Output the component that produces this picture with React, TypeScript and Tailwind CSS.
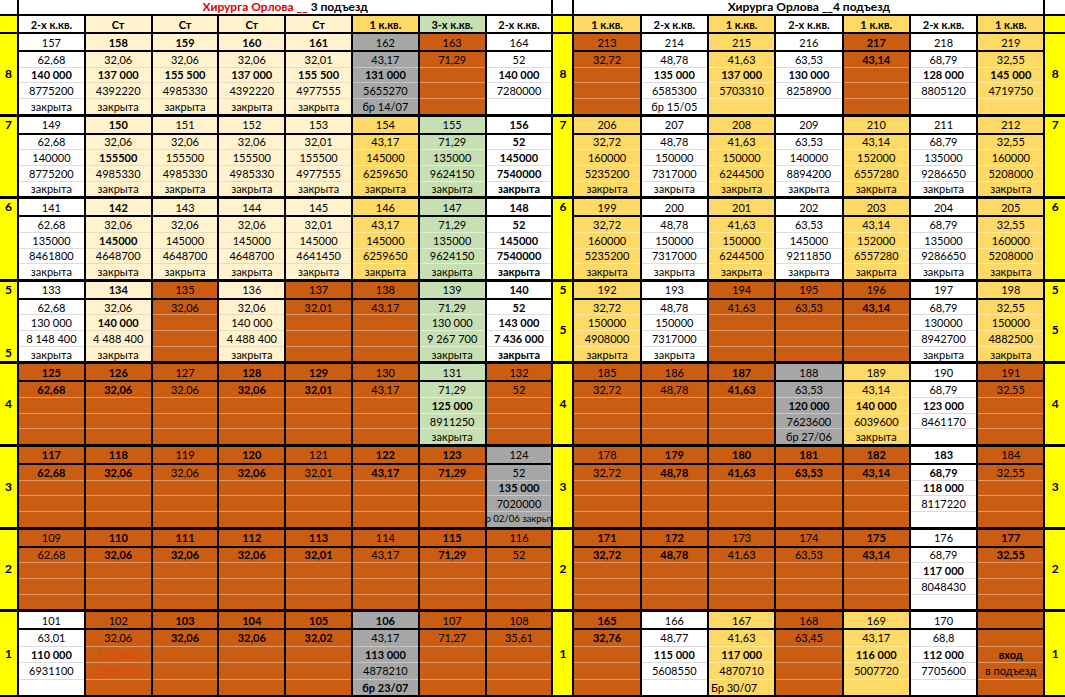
import React from "react";

type C = string[];

const BG: Record<string, string> = {
  w: "bg-white",
  c: "bg-[#fff2cc]",
  g: "bg-[#ffd966]",
  gr: "bg-[#c6e0b4]",
  o: "bg-[#cb5d12]",
  s: "bg-[#a6a6a6]",
};
const LINE: Record<string, string> = {
  w: "border-[#dcdcdc]",
  c: "border-[#e6dcc0]",
  g: "border-[#ffeaa6]",
  gr: "border-[#e2efd9]",
  o: "border-[#e09a70]",
  s: "border-[#c8c8c8]",
};

const GRID =
  "grid grid-cols-[17px_repeat(8,64.8px)_19px_repeat(7,65.3px)_1fr] gap-x-[2px]";

function parse(s: string) {
  let bold = false,
    red = false,
    left = false,
    small = false;
  let t = s;
  while (t.length && "*!<~".includes(t[0])) {
    if (t[0] === "*") bold = true;
    if (t[0] === "!") {
      red = true;
      bold = true;
    }
    if (t[0] === "<") left = true;
    if (t[0] === "~") small = true;
    t = t.slice(1);
  }
  return { t, bold, red, left, small };
}

function Txt({ s }: { s: string }) {
  const p = parse(s);
  return (
    <span
      className={`${p.bold ? "font-bold" : "font-normal"} ${p.red ? "text-[#e8470a]" : "text-black"} ${
        p.small ? "text-[9.6px]" : ""
      }`}
    >
      {p.t}
    </span>
  );
}

function Cell({ c }: { c: C }) {
  const bg = BG[c[0]];
  const line = LINE[c[0]];
  const rows = [c[2] || "", c[3] || "", c[4] || "", c[5] || ""];
  return (
    <div className="flex flex-col gap-[2px] min-w-0">
      <div className={`h-[16px] flex items-center justify-center ${bg}`}>
        <Txt s={c[1] || ""} />
      </div>
      <div className={`flex-1 flex flex-col ${bg}`}>
        {rows.map((r, i) => {
          const p = parse(r);
          return (
            <div
              key={i}
              className={`flex-1 flex items-center overflow-hidden whitespace-nowrap ${
                p.left ? "justify-start pl-[2px]" : "justify-center"
              } ${i < 3 ? "border-b " + line : ""}`}
            >
              <Txt s={r} />
            </div>
          );
        })}
      </div>
    </div>
  );
}

type Mode = "mid" | "top" | "tb" | "tm";

function Label({ n, mode }: { n: string; mode: Mode }) {
  const L = "font-bold text-[12px] text-black";
  if (mode === "mid")
    return (
      <div className={`bg-[#ffff00] flex items-center justify-center ${L}`}>{n}</div>
    );
  return (
    <div className={`bg-[#ffff00] flex flex-col ${L}`}>
      <div className="h-[16px] flex items-center justify-center">{n}</div>
      <div className="flex-1 flex items-center justify-center">{mode === "tm" ? n : ""}</div>
      {mode === "tb" && <div className="h-[16px] flex items-center justify-center">{n}</div>}
    </div>
  );
}

type Floor = { n: string; modes: [Mode, Mode, Mode]; s3: C[]; s4: C[] };

const floors: Floor[] = [
  {
    n: "8",
    modes: ["mid", "mid", "mid"],
    s3: [
      ["w", "157", "62,68", "*140 000", "8775200", "закрыта"],
      ["c", "*158", "32,06", "*137 000", "4392220", "закрыта"],
      ["c", "*159", "32,06", "*155 500", "4985330", "закрыта"],
      ["c", "*160", "32,06", "*137 000", "4392220", "закрыта"],
      ["c", "*161", "32,01", "*155 500", "4977555", "закрыта"],
      ["s", "162", "43,17", "*131 000", "5655270", "бр 14/07"],
      ["o", "163", "71,29"],
      ["w", "164", "52", "*140 000", "7280000", ""],
    ],
    s4: [
      ["o", "213", "32,72"],
      ["w", "214", "48,78", "*135 000", "6585300", "бр 15/05"],
      ["g", "215", "41,63", "*137 000", "5703310", ""],
      ["w", "216", "63,53", "*130 000", "8258900", ""],
      ["o", "*217", "*43,14"],
      ["w", "218", "68,79", "*128 000", "8805120", ""],
      ["g", "219", "32,55", "*145 000", "4719750", ""],
    ],
  },
  {
    n: "7",
    modes: ["top", "top", "top"],
    s3: [
      ["w", "149", "62,68", "140000", "8775200", "закрыта"],
      ["c", "*150", "32,06", "*155500", "4985330", "закрыта"],
      ["c", "151", "32,06", "155500", "4985330", "закрыта"],
      ["c", "152", "32,06", "155500", "4985330", "закрыта"],
      ["c", "153", "32,01", "155500", "4977555", "закрыта"],
      ["g", "154", "43,17", "145000", "6259650", "закрыта"],
      ["gr", "155", "71,29", "135000", "9624150", "закрыта"],
      ["w", "*156", "*52", "*145000", "*7540000", "*закрыта"],
    ],
    s4: [
      ["g", "206", "32,72", "160000", "5235200", "закрыта"],
      ["w", "207", "48,78", "150000", "7317000", "закрыта"],
      ["g", "208", "41,63", "150000", "6244500", "закрыта"],
      ["w", "209", "63,53", "140000", "8894200", "закрыта"],
      ["g", "210", "43,14", "152000", "6557280", "закрыта"],
      ["w", "211", "68,79", "135000", "9286650", "закрыта"],
      ["g", "212", "32,55", "160000", "5208000", "закрыта"],
    ],
  },
  {
    n: "6",
    modes: ["top", "top", "top"],
    s3: [
      ["w", "141", "62,68", "135000", "8461800", "закрыта"],
      ["c", "*142", "32,06", "*145000", "4648700", "закрыта"],
      ["c", "143", "32,06", "145000", "4648700", "закрыта"],
      ["c", "144", "32,06", "145000", "4648700", "закрыта"],
      ["c", "145", "32,01", "145000", "4641450", "закрыта"],
      ["g", "146", "43,17", "145000", "6259650", "закрыта"],
      ["gr", "147", "71,29", "135000", "9624150", "закрыта"],
      ["w", "*148", "*52", "*145000", "*7540000", "*закрыта"],
    ],
    s4: [
      ["g", "199", "32,72", "160000", "5235200", "закрыта"],
      ["w", "200", "48,78", "150000", "7317000", "закрыта"],
      ["g", "201", "41,63", "150000", "6244500", "закрыта"],
      ["w", "202", "63,53", "145000", "9211850", "закрыта"],
      ["g", "203", "43,14", "152000", "6557280", "закрыта"],
      ["w", "204", "68,79", "135000", "9286650", "закрыта"],
      ["g", "205", "32,55", "160000", "5208000", "закрыта"],
    ],
  },
  {
    n: "5",
    modes: ["tb", "tm", "tm"],
    s3: [
      ["w", "133", "62,68", "130 000", "8 148 400", "закрыта"],
      ["c", "*134", "32,06", "*140 000", "4 488 400", "закрыта"],
      ["o", "135", "32,06"],
      ["c", "136", "32,06", "140 000", "4 488 400", "закрыта"],
      ["o", "137", "32,01"],
      ["o", "138", "43,17"],
      ["gr", "139", "71,29", "130 000", "9 267 700", "закрыта"],
      ["w", "*140", "*52", "*143 000", "*7 436 000", "*закрыта"],
    ],
    s4: [
      ["g", "192", "32,72", "150000", "4908000", "закрыта"],
      ["w", "193", "48,78", "150000", "7317000", "закрыта"],
      ["o", "194", "41,63"],
      ["o", "195", "63,53"],
      ["o", "196", "*43,14"],
      ["w", "197", "68,79", "130000", "8942700", "закрыта"],
      ["g", "198", "32,55", "150000", "4882500", "закрыта"],
    ],
  },
  {
    n: "4",
    modes: ["mid", "mid", "mid"],
    s3: [
      ["o", "*125", "*62,68"],
      ["o", "*126", "*32,06"],
      ["o", "127", "32,06"],
      ["o", "*128", "*32,06"],
      ["o", "*129", "*32,01"],
      ["o", "130", "43,17"],
      ["gr", "131", "71,29", "*125 000", "8911250", "закрыта"],
      ["o", "132", "52"],
    ],
    s4: [
      ["o", "185", "32,72"],
      ["o", "186", "48,78"],
      ["o", "*187", "*41,63"],
      ["s", "188", "63,53", "*120 000", "7623600", "бр 27/06"],
      ["g", "189", "43,14", "*140 000", "6039600", "закрыта"],
      ["w", "190", "68,79", "*123 000", "8461170", ""],
      ["o", "191", "32,55"],
    ],
  },
  {
    n: "3",
    modes: ["mid", "mid", "mid"],
    s3: [
      ["o", "*117", "*62,68"],
      ["o", "*118", "*32,06"],
      ["o", "119", "32,06"],
      ["o", "*120", "*32,06"],
      ["o", "121", "32,01"],
      ["o", "*122", "*43,17"],
      ["o", "*123", "*71,29"],
      ["s", "124", "52", "*135 000", "7020000", "~бр 02/06 закрыта"],
    ],
    s4: [
      ["o", "178", "32,72"],
      ["o", "*179", "*48,78"],
      ["o", "*180", "*41,63"],
      ["o", "*181", "*63,53"],
      ["o", "*182", "*43,14"],
      ["w", "*183", "*68,79", "*118 000", "8117220", ""],
      ["o", "184", "32,55"],
    ],
  },
  {
    n: "2",
    modes: ["mid", "mid", "mid"],
    s3: [
      ["o", "109", "62,68"],
      ["o", "*110", "*32,06"],
      ["o", "*111", "*32,06"],
      ["o", "*112", "*32,06"],
      ["o", "*113", "*32,01"],
      ["o", "114", "43,17"],
      ["o", "*115", "*71,29"],
      ["o", "116", "52"],
    ],
    s4: [
      ["o", "*171", "*32,72"],
      ["o", "*172", "*48,78"],
      ["o", "173", "41,63"],
      ["o", "174", "63,53"],
      ["o", "*175", "*43,14"],
      ["w", "176", "68,79", "*117 000", "8048430", ""],
      ["o", "*177", "*32,55"],
    ],
  },
  {
    n: "1",
    modes: ["mid", "mid", "mid"],
    s3: [
      ["w", "101", "63,01", "*110 000", "6931100", ""],
      ["o", "102", "32,06", "!112 000", "!3590720", ""],
      ["o", "*103", "*32,06"],
      ["o", "*104", "*32,06"],
      ["o", "*105", "*32,02"],
      ["s", "*106", "43,17", "*113 000", "4878210", "*бр 23/07"],
      ["o", "107", "71,27"],
      ["o", "108", "35,61"],
    ],
    s4: [
      ["o", "*165", "*32,76"],
      ["w", "166", "48,77", "*115 000", "5608550", ""],
      ["g", "167", "41,63", "*117 000", "4870710", "<Бр 30/07"],
      ["o", "168", "63,45"],
      ["g", "169", "43,17", "*116 000", "5007720", ""],
      ["w", "170", "68,8", "*112 000", "7705600", ""],
      ["o", "", "", "*вход", "в подъезд", ""],
    ],
  },
];

const head3: [string, string][] = [
  ["w", "2-х к.кв."],
  ["c", "Ст"],
  ["c", "Ст"],
  ["c", "Ст"],
  ["c", "Ст"],
  ["g", "1 к.кв."],
  ["gr", "3-х к.кв."],
  ["w", "2-х к.кв."],
];
const head4: [string, string][] = [
  ["g", "1 к.кв."],
  ["w", "2-х к.кв."],
  ["g", "1 к.кв."],
  ["w", "2-х к.кв."],
  ["g", "1 к.кв."],
  ["w", "2-х к.кв."],
  ["g", "1 к.кв."],
];

export default function App() {
  return (
    <div className="w-[1065px] h-[697px] bg-black flex flex-col overflow-hidden font-[Lato,sans-serif] text-[11px] leading-none text-black">
      {/* title row */}
      <div className={`${GRID} h-[14px] shrink-0`}>
        <div className="bg-white" />
        <div className="col-span-8 bg-white flex items-center justify-center text-[12px] font-bold whitespace-nowrap">
          <span className="text-[#dd0000]">Хирурга Орлова __</span>
          <span className="whitespace-pre"> 3 подъезд</span>
        </div>
        <div className="bg-white" />
        <div className="col-span-7 bg-white flex items-center justify-center text-[12px] font-bold whitespace-nowrap">
          Хирурга Орлова __4 подъезд
        </div>
        <div className="bg-white" />
      </div>
      {/* header row */}
      <div className={`${GRID} h-[16px] mt-[2px] shrink-0`}>
        <div className="bg-[#ffff00]" />
        {head3.map(([b, t], i) => (
          <div key={i} className={`${BG[b]} flex items-center justify-center font-bold`}>
            {t}
          </div>
        ))}
        <div className="bg-[#ffff00]" />
        {head4.map(([b, t], i) => (
          <div key={i} className={`${BG[b]} flex items-center justify-center font-bold`}>
            {t}
          </div>
        ))}
        <div className="bg-[#ffff00]" />
      </div>
      {floors.map((f, fi) => (
        <div
          key={f.n}
          className={`${GRID} ${fi === 0 ? "mt-[2px]" : "mt-[3px]"} ${
            fi === floors.length - 1 ? "flex-1 mb-[2px]" : "h-[79.6px] shrink-0"
          }`}
        >
          <Label n={f.n} mode={f.modes[0]} />
          {f.s3.map((c, i) => (
            <Cell key={i} c={c} />
          ))}
          <Label n={f.n} mode={f.modes[1]} />
          {f.s4.map((c, i) => (
            <Cell key={i} c={c} />
          ))}
          <Label n={f.n} mode={f.modes[2]} />
        </div>
      ))}
    </div>
  );
}
